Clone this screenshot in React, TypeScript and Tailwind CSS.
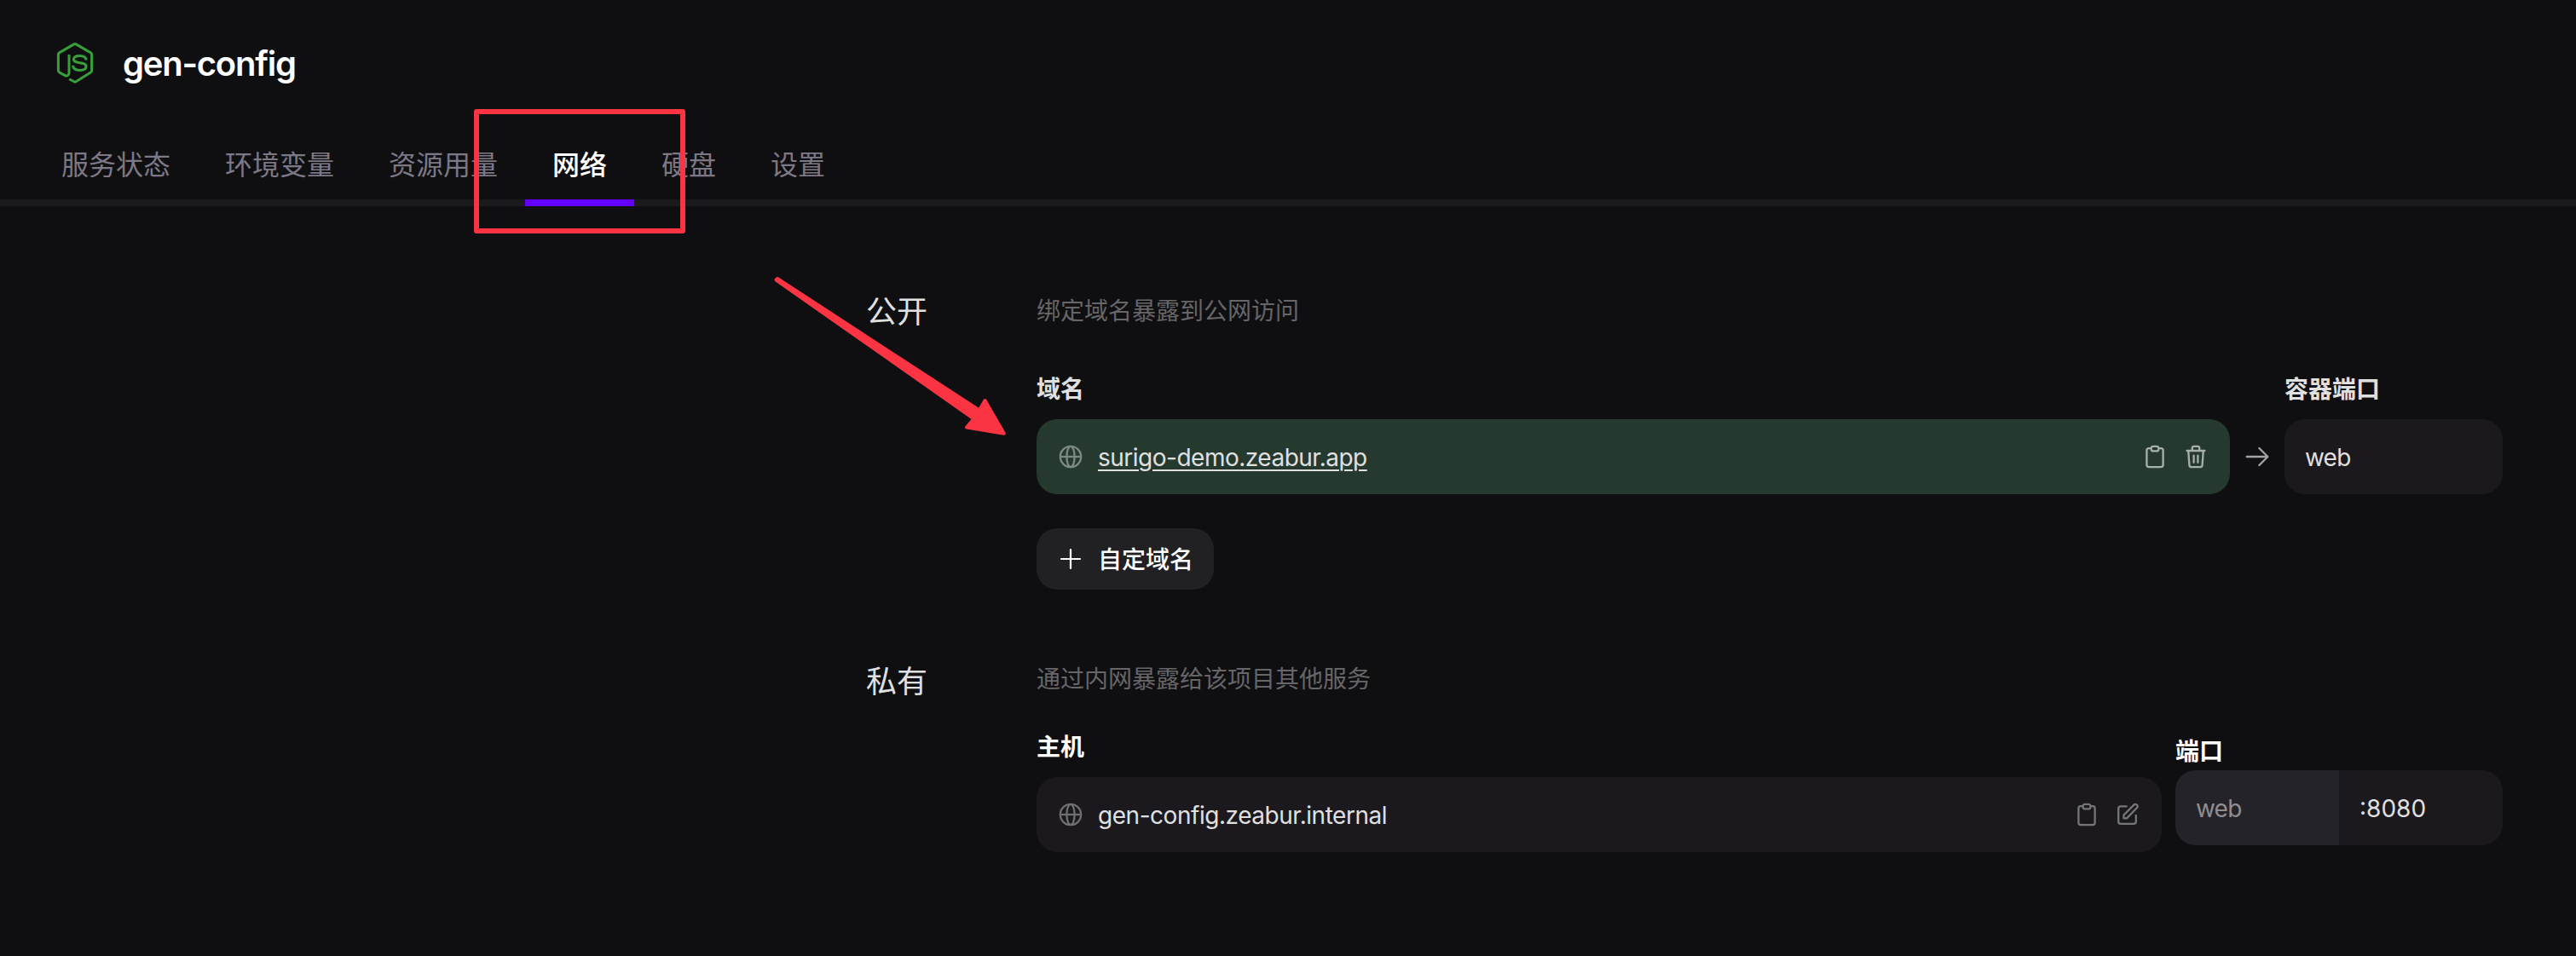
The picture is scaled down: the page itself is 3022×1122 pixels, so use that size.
import React from "react";

type IconProps = { className?: string };

const NodeLogo = ({ className }: IconProps) => (
  <svg className={className} viewBox="0 0 44 50" fill="none" stroke="#37a03a" strokeWidth="3" strokeLinejoin="round">
    <path d="M15 15V36.4C15 40 12.4 40.8 9.8 39.4L3.6 35.9Q2.4 35.2 2.4 33.8V15Q2.4 13.6 3.6 12.9L20.8 2.9Q22 2.2 23.2 2.9L40.4 12.9Q41.6 13.6 41.6 15V33.8Q41.6 35.2 40.4 35.9L23.2 46.8Q22 47.5 20.8 46.8L15.2 43.8" />
    <path d="M35 21.6C35 17.8 32.4 16.4 27.6 16.4C23 16.4 20.4 17.6 20.4 20.6C20.4 27 35 22.4 35 29C35 32.4 32 33.4 27.6 33.4C22.6 33.4 19.6 31.8 19.6 27.8" />
  </svg>
);

const GlobeIcon = ({ className }: IconProps) => (
  <svg className={className} viewBox="0 0 28 28" fill="none" stroke="currentColor" strokeWidth="2.3">
    <circle cx="14" cy="14" r="12.2" />
    <ellipse cx="14" cy="14" rx="4.6" ry="12.2" />
    <path d="M1.8 14H26.2" />
  </svg>
);

const ClipboardIcon = ({ className }: IconProps) => (
  <svg className={className} viewBox="0 0 28 28" fill="none" stroke="currentColor" strokeWidth="2.3" strokeLinejoin="round">
    <path d="M9.5 4.2H7Q4.4 4.2 4.4 6.8V23.6Q4.4 26.2 7 26.2H21Q23.6 26.2 23.6 23.6V6.8Q23.6 4.2 21 4.2H18.5" />
    <rect x="9.6" y="1.8" width="8.8" height="5.6" rx="2.5" />
  </svg>
);

const TrashIcon = ({ className }: IconProps) => (
  <svg className={className} viewBox="0 0 28 28" fill="none" stroke="currentColor" strokeWidth="2.3" strokeLinecap="round" strokeLinejoin="round">
    <path d="M3.6 7H24.4M9.8 7V3.8Q9.8 1.8 11.8 1.8H16.2Q18.2 1.8 18.2 3.8V7M5.2 7L6.4 23.8Q6.6 26.2 9 26.2H19Q21.4 26.2 21.6 23.8L22.8 7M11.6 12.6V20.8M16.4 12.6V20.8" />
  </svg>
);

const EditIcon = ({ className }: IconProps) => (
  <svg className={className} viewBox="0 0 28 28" fill="none" stroke="currentColor" strokeWidth="2.3" strokeLinecap="round" strokeLinejoin="round">
    <path d="M12.6 4.4H5.8Q3.2 4.4 3.2 7V22.2Q3.2 24.8 5.8 24.8H21.2Q23.8 24.8 23.8 22.2V15" />
    <path d="M9.4 18.4V14.6L21.4 2.6Q23 1.2 24.8 2.6Q26.4 4.4 25 6L13 18.4Z" />
  </svg>
);

const ArrowIcon = ({ className }: IconProps) => (
  <svg className={className} viewBox="0 0 28 28" fill="none" stroke="currentColor" strokeWidth="2.4" strokeLinecap="round" strokeLinejoin="round">
    <path d="M1.8 14H26M16.4 4L26.4 14L16.4 24" />
  </svg>
);

const PlusIcon = ({ className }: IconProps) => (
  <svg className={className} viewBox="0 0 28 28" fill="none" stroke="currentColor" strokeWidth="2.2" strokeLinecap="round">
    <path d="M14 3V25M3 14H25" />
  </svg>
);

const tabs = ["服务状态", "环境变量", "资源用量", "网络", "硬盘", "设置"];

export default function App() {
  return (
    <div className="relative h-[1122px] w-[3022px] overflow-hidden bg-[#0f0f11] font-['Inter','Noto_Sans_CJK_SC',sans-serif] text-[28px] leading-[40px] text-[#e0e0e0]">
      <header className="flex h-[148px] items-center gap-[34px] pl-[66px]">
        <NodeLogo className="h-[50px] w-11" />
        <h1 className="pt-0.5 text-[40px] font-semibold tracking-[-1.25px] text-white">gen-config</h1>
      </header>

      <nav className="flex h-[94px] border-b-8 border-[#1a1a1c] pl-10 text-[32px] leading-[48px] text-[#7c7885]">
        {tabs.map((tab) => (
          <div
            key={tab}
            className={
              tab === "网络"
                ? "h-[94px] border-b-8 border-[#6300ff] px-8 pt-[22px] font-medium text-white"
                : "h-[94px] px-8 pt-[22px]"
            }
          >
            {tab}
          </div>
        ))}
      </nav>

      <main className="w-[2936px] pl-[1016px]">
        <section className="flex pt-[103px]">
          <h2 className="w-[200px] pt-px text-[36px]">公开</h2>
          <div className="flex-1">
            <p className="text-[#666668]">绑定域名暴露到公网访问</p>
            <div className="mt-[52px] flex items-end">
              <div className="flex-1">
                <div className="font-bold">域名</div>
                <div className="mt-[15px] flex h-[88px] items-center rounded-3xl bg-[#25392e] px-[26px]">
                  <GlobeIcon className="mr-[18px] h-7 w-7 text-[#7d8a82]" />
                  <span className="flex-1 pt-px tracking-[-0.5px] underline decoration-2 underline-offset-4">surigo-demo.zeabur.app</span>
                  <ClipboardIcon className="mr-5 h-7 w-7 text-[#a8b0ab]" />
                  <TrashIcon className="h-7 w-7 text-[#a8b0ab]" />
                </div>
              </div>
              <div className="flex h-[88px] w-16 items-center justify-center">
                <ArrowIcon className="h-7 w-7 text-[#a2a2a3]" />
              </div>
              <div className="w-64">
                <div className="font-bold">容器端口</div>
                <div className="mt-[15px] flex h-[88px] items-center rounded-3xl bg-[#1b191e] px-6 pt-px tracking-[-0.8px]">web</div>
              </div>
            </div>
            <button className="mt-10 flex h-[72px] w-[208px] items-center rounded-3xl bg-[#212123] pl-[26px] font-medium text-white">
              <PlusIcon className="mr-[18px] h-7 w-7" />
              <span className="pt-px">自定域名</span>
            </button>
          </div>
        </section>

        <section className="flex pt-[85px]">
          <h2 className="w-[200px] pt-[3px] text-[36px]">私有</h2>
          <div className="flex-1">
            <p className="text-[#666668]">通过内网暴露给该项目其他服务</p>
            <div className="mt-10 flex items-start gap-4">
              <div className="flex-1">
                <div className="font-bold text-white">主机</div>
                <div className="mt-[15px] flex h-[88px] items-center rounded-3xl bg-[#1b191e] px-[26px]">
                  <GlobeIcon className="mr-[18px] h-7 w-7 text-[#6f6e71]" />
                  <span className="flex-1 pt-px tracking-[-0.46px]">gen-config.zeabur.internal</span>
                  <ClipboardIcon className="mr-5 h-7 w-7 text-[#767578]" />
                  <EditIcon className="h-7 w-7 text-[#767578]" />
                </div>
              </div>
              <div className="w-96 pt-[5px]">
                <div className="font-bold text-white">端口</div>
                <div className="mt-0.5 flex h-[88px] items-center overflow-hidden rounded-3xl bg-[#1b191e]">
                  <div className="flex h-full w-48 items-center bg-[#242329] pl-6 pt-px tracking-[-0.8px] text-[#8f8f92]">web</div>
                  <div className="pl-6 pt-px">:8080</div>
                </div>
              </div>
            </div>
          </div>
        </section>
      </main>

      <div className="absolute left-[556px] top-[128px] h-[146px] w-[248px] rounded-[3px] border-[6px] border-[#fa3442]" />
      <svg className="absolute left-[900px] top-[316px] h-[204px] w-[290px]" viewBox="900 316 290 204" fill="#fa3442" stroke="#fa3442" strokeWidth="4" strokeLinejoin="round">
        <path d="M912 327L1148.8 481.5L1155.5 470L1177.8 508.8L1134 501.5L1142.5 491.5L910.5 328.5Z" />
      </svg>
    </div>
  );
}
